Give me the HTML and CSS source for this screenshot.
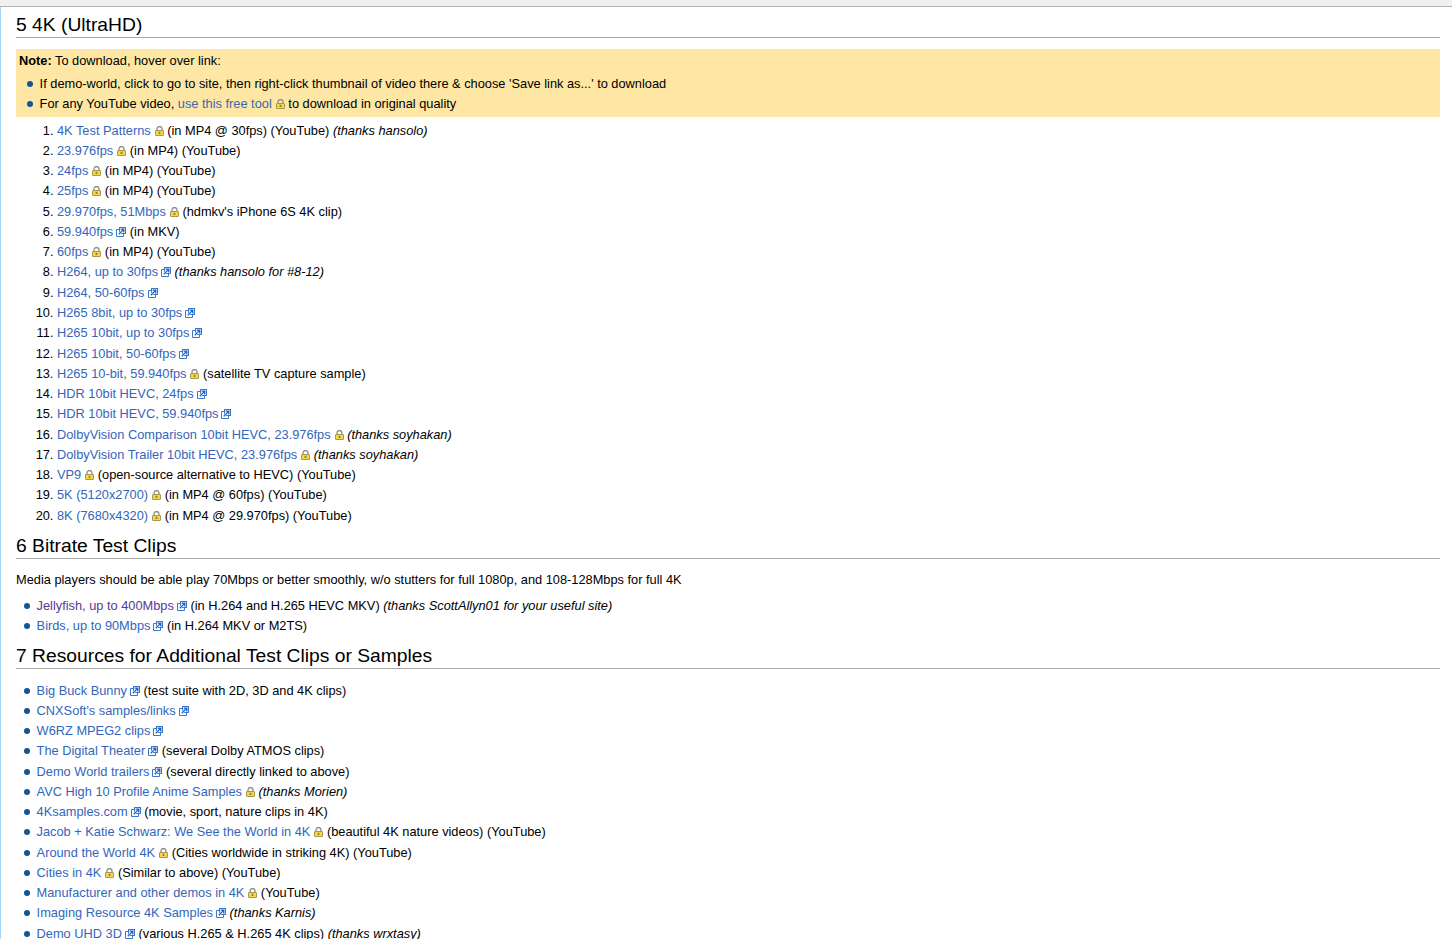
FILE: index.html
```html
<!DOCTYPE html>
<html lang="en">
<head>
<meta charset="utf-8">
<title>Test Clips</title>
<link rel="stylesheet" href="styles.css">
</head>
<body>
<svg class="defs" width="0" height="0" aria-hidden="true">
  <symbol id="lock" viewBox="0 0 9 10">
    <path d="M2 4.5V3a2.5 2.5 0 0 1 5 0V4.5" fill="none" stroke="#8e8e86" stroke-width="1.3"/>
    <rect x="0.5" y="4.5" width="8" height="5" rx="0.5" fill="#f6d84a" stroke="#a8984c"/>
    <rect x="3.6" y="5.8" width="1.8" height="2.2" fill="#94803a"/>
  </symbol>
  <symbol id="ext" viewBox="0 0 10 10">
    <path d="M3.5 2.5H.5v7h7V6.5" fill="#fff" stroke="#3a78d0"/>
    <rect x="3.5" y="0.5" width="6" height="6" fill="#fff" stroke="#3a78d0"/>
    <path d="M2.6 7.4l4.4-4.4" fill="none" stroke="#fff" stroke-width="2.4"/>
    <path d="M2.8 7.2l4.3-4.3M4.6 2.2h3.2v3.2" fill="none" stroke="#1a5fc0" stroke-width="1.3"/>
  </symbol>
</svg>
<div class="topbar"></div>
<main class="content">
  <h2>5 4K (UltraHD)</h2>
  <div class="note">
    <p><b>Note:</b> To download, hover over link:</p>
    <ul>
      <li>If demo-world, click to go to site, then right-click thumbnail of video there &amp; choose 'Save link as...' to download</li>
      <li>For any YouTube video, <a href="#">use this free tool<svg class="lock"><use href="#lock"/></svg></a> to download in original quality</li>
    </ul>
  </div>
  <ol>
    <li><a href="#">4K Test Patterns<svg class="lock"><use href="#lock"/></svg></a> (in MP4 @ 30fps) (YouTube) <i>(thanks hansolo)</i></li>
    <li><a href="#">23.976fps<svg class="lock"><use href="#lock"/></svg></a> (in MP4) (YouTube)</li>
    <li><a href="#">24fps<svg class="lock"><use href="#lock"/></svg></a> (in MP4) (YouTube)</li>
    <li><a href="#">25fps<svg class="lock"><use href="#lock"/></svg></a> (in MP4) (YouTube)</li>
    <li><a href="#">29.970fps, 51Mbps<svg class="lock"><use href="#lock"/></svg></a> (hdmkv's iPhone 6S 4K clip)</li>
    <li><a href="#">59.940fps<svg class="ext"><use href="#ext"/></svg></a> (in MKV)</li>
    <li><a href="#">60fps<svg class="lock"><use href="#lock"/></svg></a> (in MP4) (YouTube)</li>
    <li><a href="#">H264, up to 30fps<svg class="ext"><use href="#ext"/></svg></a> <i>(thanks hansolo for #8-12)</i></li>
    <li><a href="#">H264, 50-60fps<svg class="ext"><use href="#ext"/></svg></a></li>
    <li><a href="#">H265 8bit, up to 30fps<svg class="ext"><use href="#ext"/></svg></a></li>
    <li><a href="#">H265 10bit, up to 30fps<svg class="ext"><use href="#ext"/></svg></a></li>
    <li><a href="#">H265 10bit, 50-60fps<svg class="ext"><use href="#ext"/></svg></a></li>
    <li><a href="#">H265 10-bit, 59.940fps<svg class="lock"><use href="#lock"/></svg></a> (satellite TV capture sample)</li>
    <li><a href="#">HDR 10bit HEVC, 24fps<svg class="ext"><use href="#ext"/></svg></a></li>
    <li><a href="#">HDR 10bit HEVC, 59.940fps<svg class="ext"><use href="#ext"/></svg></a></li>
    <li><a href="#">DolbyVision Comparison 10bit HEVC, 23.976fps<svg class="lock"><use href="#lock"/></svg></a> <i>(thanks soyhakan)</i></li>
    <li><a href="#">DolbyVision Trailer 10bit HEVC, 23.976fps<svg class="lock"><use href="#lock"/></svg></a> <i>(thanks soyhakan)</i></li>
    <li><a href="#">VP9<svg class="lock"><use href="#lock"/></svg></a> (open-source alternative to HEVC) (YouTube)</li>
    <li><a href="#">5K (5120x2700)<svg class="lock"><use href="#lock"/></svg></a> (in MP4 @ 60fps) (YouTube)</li>
    <li><a href="#">8K (7680x4320)<svg class="lock"><use href="#lock"/></svg></a> (in MP4 @ 29.970fps) (YouTube)</li>
  </ol>
  <h2>6 Bitrate Test Clips</h2>
  <p class="lead">Media players should be able play 70Mbps or better smoothly, w/o stutters for full 1080p, and 108-128Mbps for full 4K</p>
  <ul class="bitrate">
    <li><a class="visited" href="#">Jellyfish, up to 400Mbps<svg class="ext"><use href="#ext"/></svg></a> (in H.264 and H.265 HEVC MKV) <i>(thanks ScottAllyn01 for your useful site)</i></li>
    <li><a href="#">Birds, up to 90Mbps<svg class="ext"><use href="#ext"/></svg></a> (in H.264 MKV or M2TS)</li>
  </ul>
  <h2>7 Resources for Additional Test Clips or Samples</h2>
  <ul class="resources">
    <li><a href="#">Big Buck Bunny<svg class="ext"><use href="#ext"/></svg></a> (test suite with 2D, 3D and 4K clips)</li>
    <li><a href="#">CNXSoft's samples/links<svg class="ext"><use href="#ext"/></svg></a></li>
    <li><a href="#">W6RZ MPEG2 clips<svg class="ext"><use href="#ext"/></svg></a></li>
    <li><a href="#">The Digital Theater<svg class="ext"><use href="#ext"/></svg></a> (several Dolby ATMOS clips)</li>
    <li><a href="#">Demo World trailers<svg class="ext"><use href="#ext"/></svg></a> (several directly linked to above)</li>
    <li><a href="#">AVC High 10 Profile Anime Samples<svg class="lock"><use href="#lock"/></svg></a> <i>(thanks Morien)</i></li>
    <li><a href="#">4Ksamples.com<svg class="ext"><use href="#ext"/></svg></a> (movie, sport, nature clips in 4K)</li>
    <li><a href="#">Jacob + Katie Schwarz: We See the World in 4K<svg class="lock"><use href="#lock"/></svg></a> (beautiful 4K nature videos) (YouTube)</li>
    <li><a href="#">Around the World 4K<svg class="lock"><use href="#lock"/></svg></a> (Cities worldwide in striking 4K) (YouTube)</li>
    <li><a href="#">Cities in 4K<svg class="lock"><use href="#lock"/></svg></a> (Similar to above) (YouTube)</li>
    <li><a href="#">Manufacturer and other demos in 4K<svg class="lock"><use href="#lock"/></svg></a> (YouTube)</li>
    <li><a href="#">Imaging Resource 4K Samples<svg class="ext"><use href="#ext"/></svg></a> <i>(thanks Karnis)</i></li>
    <li><a href="#">Demo UHD 3D<svg class="ext"><use href="#ext"/></svg></a> (various H.265 &amp; H.265 4K clips) <i>(thanks wrxtasy)</i></li>
  </ul>
</main>
</body>
</html>
```
FILE: styles.css
```css
html, body {
  margin: 0;
  height: 939px;
  overflow: hidden;
  background: #fff;
}
body {
  font-family: "Liberation Sans", Arial, sans-serif;
  font-size: 12.8px;
  line-height: 19.2px;
  color: #000;
}
.defs { display: block; height: 0; }
.topbar {
  height: 6px;
  background: #f0f0f0;
  border-bottom: 1px solid #b2b2b2;
}
.content {
  border-left: 1px solid #a7d7f9;
  padding: 6px 12px 0 15px;
}
h2 {
  margin: 0;
  font-size: 19.27px;
  font-weight: normal;
  line-height: 24px;
  border-bottom: 1px solid #aaa;
}
a { color: #3366bb; text-decoration: none; }
a.visited { color: #5a3696; }
.note {
  margin-top: 11px;
  padding: 2px 3px 2.4px;
  background: #fee7a4;
}
.note a { color: #3a69ae; }
.note p { margin: 0 0 3.6px; }
ul, ol { margin: 0; padding: 0; list-style: none; }
li { margin-bottom: 1.07px; }
ol {
  list-style: decimal;
  margin: 3.9px 0 9px;
  padding-left: 41px;
}
ul { margin-left: 20.6px; }
.lead { margin: 10.7px 0 7.3px; }
.bitrate { margin-bottom: 8.3px; }
.resources { margin-top: 11.75px; }
ul > li { position: relative; }
ul > li::before {
  content: "";
  position: absolute;
  left: -13px;
  top: 7px;
  width: 6px;
  height: 6px;
  border-radius: 50%;
  background: #14568f;
}
svg.lock {
  width: 9px;
  height: 10px;
  margin-left: 4px;
  vertical-align: -1px;
}
svg.ext {
  width: 10px;
  height: 10px;
  margin-left: 3px;
  vertical-align: -1px;
}
```
